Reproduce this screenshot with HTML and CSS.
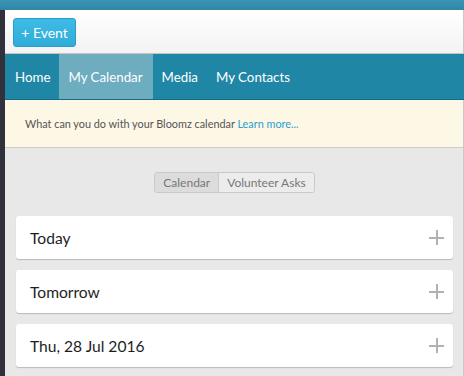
FILE: index.html
```html
<!DOCTYPE html>
<html>
<head>
<meta charset="utf-8">
<link rel="stylesheet" href="styles.css">
</head>
<body>
<div class="topbar"></div>
<div class="frame">
  <div class="sidebar"></div>
  <div class="main">
    <header class="header">
      <button class="btn-event">+ Event</button>
    </header>
    <nav class="nav">
      <a class="nav-item">Home</a>
      <a class="nav-item active">My Calendar</a>
      <a class="nav-item">Media</a>
      <a class="nav-item">My Contacts</a>
    </nav>
    <div class="info">What can you do with your Bloomz calendar <a class="link">Learn more...</a></div>
    <div class="content">
      <div class="seg">
        <span class="seg-item active">Calendar</span>
        <span class="seg-item">Volunteer Asks</span>
      </div>
      <div class="cards">
        <div class="card"><span class="card-title">Today</span><span class="plus"></span></div>
        <div class="card"><span class="card-title">Tomorrow</span><span class="plus"></span></div>
        <div class="card"><span class="card-title">Thu, 28 Jul 2016</span><span class="plus"></span></div>
      </div>
    </div>
  </div>
</div>
</body>
</html>
```
FILE: styles.css
```css
* { box-sizing: border-box; }
html, body { margin: 0; padding: 0; }
body {
  width: 464px;
  height: 376px;
  overflow: hidden;
  background: #e8e8e8;
  font-family: Lato, "Open Sans", sans-serif;
}
.topbar {
  height: 10px;
  background: linear-gradient(#3a94b4, #2f87a6);
}
.frame {
  display: flex;
  height: 366px;
}
.sidebar {
  width: 5px;
  background: #30313b;
}
.main {
  flex: 1;
  display: flex;
  flex-direction: column;
  border-right: 1px solid #c9c9c9;
  background: #e8e8e8;
}
.header {
  height: 44px;
  background: linear-gradient(#ffffff, #f3f3f3);
  border-bottom: 1px solid #c4c4c4;
  padding: 8px 0 0 8px;
}
.btn-event {
  width: 63px;
  height: 29px;
  background: linear-gradient(#3dbbe6, #31acd9);
  border: 1px solid #279dc9;
  border-radius: 3px;
  color: #fff;
  font-family: inherit;
  font-size: 14px;
  padding: 0;
}
.nav {
  display: flex;
  height: 46px;
  background: #1f87a5;
  border-bottom: 1px solid #176a82;
  padding-left: 1px;
  margin-right: -1px;
}
.nav-item {
  display: flex;
  align-items: center;
  padding: 0 9px;
  color: #fff;
  font-size: 13.3px;
}
.nav-item.active { background: #6eacbf; padding: 0 10px 0 9px; }
.info {
  height: 48px;
  background: #fdf7e5;
  border-bottom: 1px solid #cbcbcb;
  display: flex;
  align-items: center;
  padding-left: 20px;
  font-size: 10.85px;
  color: #555;
  white-space: pre;
}
.link { color: #2aa0cf; }
.content {
  flex: 1;
  padding: 24px 10px 0 11px;
}
.seg {
  display: flex;
  width: max-content;
  margin: 0 auto;
  height: 21px;
  border: 1px solid #c9c9c9;
  border-radius: 3px;
  overflow: hidden;
  font-size: 12px;
  color: #777;
}
.seg-item {
  display: flex;
  align-items: center;
  padding: 0 8px;
  background: #ececec;
}
.seg-item.active {
  background: #dcdcdc;
  border-right: 1px solid #c9c9c9;
}
.cards {
  display: flex;
  flex-direction: column;
  gap: 11px;
  margin-top: 23px;
}
.card {
  height: 43px;
  background: #fff;
  border-radius: 3px;
  box-shadow: 0 1px 1px rgba(0,0,0,0.2);
  display: flex;
  align-items: center;
  justify-content: space-between;
  padding: 0 9px 0 14px;
}
.card-title {
  font-size: 15.6px;
  color: #1e1e1e;
}
.plus {
  position: relative;
  width: 15px;
  height: 15px;
}
.plus::before, .plus::after {
  content: "";
  position: absolute;
  background: #b2b2b2;
}
.plus::before { left: 0; right: 0; top: 7px; height: 1.5px; }
.plus::after { top: 0; bottom: 0; left: 7px; width: 1.5px; }
```
